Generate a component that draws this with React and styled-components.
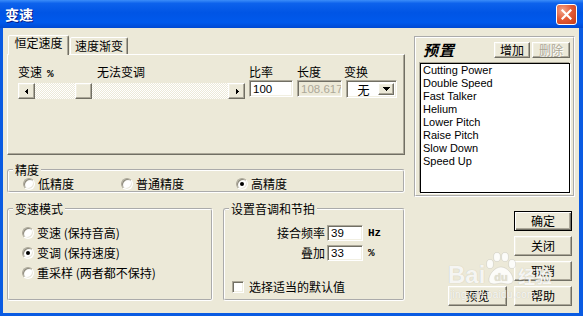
import React from "react";
import styled, { createGlobalStyle, css } from "styled-components";

const CJK = `"Noto Sans CJK SC", "Liberation Sans", sans-serif`;
const LATIN = `"Liberation Sans", Arial, sans-serif`;

const GlobalStyle = createGlobalStyle`
  html, body { margin: 0; padding: 0; background: #ffffff; }
  body { font-family: ${CJK}; font-size: 12px; }
  *, *::before, *::after { box-sizing: border-box; }
`;

const raised = css`
  background: #ece9d8;
  border: 1px solid;
  border-color: #ffffff #716f64 #716f64 #ffffff;
  box-shadow: inset -1px -1px 0 #aca899, inset 1px 1px 0 #f1efe2;
`;

const sunken = css`
  border: 1px solid;
  border-color: #aca899 #ffffff #ffffff #aca899;
  box-shadow: inset 1px 1px 0 #716f64, inset -1px -1px 0 #f1efe2;
`;

const Window = styled.div`
  position: relative;
  width: 583px;
  height: 316px;
  display: flex;
  flex-direction: column;
  background: #0a5be2;
  overflow: hidden;
  font-family: ${CJK};
  font-size: 12px;
  color: #000;
`;

const TitleBar = styled.div`
  flex: none;
  height: 28px;
  display: flex;
  align-items: center;
  justify-content: space-between;
  padding: 0 6px 0 5px;
  background: linear-gradient(
    180deg,
    #3b8df9 0%,
    #0d62ec 12%,
    #0055e5 45%,
    #0059ec 80%,
    #0049d2 100%
  );
`;

const Title = styled.span`
  color: #fff;
  font-weight: bold;
  font-size: 14px;
  letter-spacing: 0px;
  text-shadow: 1px 1px 0 #0a1883;
`;

const CloseButton = styled.div`
  align-self: flex-start;
  margin-top: 4px;
  width: 21px;
  height: 21px;
  border: 1px solid #fff;
  border-radius: 3px;
  background: radial-gradient(circle at 30% 28%, #f2a58b 0%, #e35a36 48%, #c53c16 100%);
  display: flex;
  align-items: center;
  justify-content: center;
`;

const Frame = styled.div`
  flex: 1;
  min-height: 0;
  display: flex;
  padding: 0 4px 3px 3px;
`;

const Client = styled.div`
  flex: 1;
  background: #ece9d8;
  display: grid;
  grid-template-columns: 398px 161px;
  column-gap: 9px;
  align-items: start;
  padding: 7px 4px 0 4px;
`;

const LeftColumn = styled.div`
  display: flex;
  flex-direction: column;
`;

const TabStrip = styled.div`
  display: flex;
  align-items: flex-end;
  height: 19px;
  padding-left: 1px;
  position: relative;
  z-index: 1;
`;

const Tab = styled.div`
  width: ${(p) => p.$w}px;
  height: ${(p) => (p.$active ? 20 : 17)}px;
  margin-bottom: ${(p) => (p.$active ? -1 : 0)}px;
  margin-left: ${(p) => p.$gap || 0}px;
  padding-top: ${(p) => (p.$active ? 0 : 1)}px;
  background: #ece9d8;
  border: 1px solid;
  border-bottom: none;
  border-color: #fff #716f64 transparent #fff;
  box-shadow: inset -1px 0 0 #aca899;
  border-radius: 2px 2px 0 0;
  text-align: center;
  line-height: 14px;
  white-space: nowrap;
`;

const TabPanel = styled.div`
  height: 101px;
  border: 1px solid;
  border-color: #fff #716f64 #716f64 #fff;
  box-shadow: inset -1px -1px 0 #aca899;
  display: grid;
  grid-template-columns: 227px 44px 45px 51px;
  grid-template-rows: 14px auto;
  column-gap: 4px;
  row-gap: 1px;
  align-items: start;
  align-content: start;
  padding: 10px 0 0 10px;
`;

const LabelCell = styled.div`
  display: flex;
`;

const FieldLabel = styled.span`
  display: block;
  line-height: 14px;
  white-space: nowrap;
  width: ${(p) => (p.$w ? `${p.$w}px` : "auto")};
  margin-left: ${(p) => p.$shift || 0}px;
`;

const Percent = styled.span`
  font-family: "Liberation Mono", monospace;
  font-size: 11px;
  font-weight: bold;
  margin-left: 5px;
`;

const ScrollBar = styled.div`
  display: flex;
  height: 16px;
  margin-top: 3px;
  background-color: #ece9d8;
  background-image: repeating-conic-gradient(#ffffff 0 25%, #ece9d8 0 50%);
  background-size: 2px 2px;
`;

const ScrollButton = styled.div`
  ${raised};
  flex: none;
  width: ${(p) => p.$w || 17}px;
  height: 16px;
  display: flex;
  align-items: center;
  justify-content: center;
  margin-left: ${(p) => p.$offset || 0}px;
`;

const ScrollTrack = styled.div`
  flex: 1;
  display: flex;
`;

const TextBox = styled.div`
  ${sunken};
  width: ${(p) => (p.$w ? `${p.$w}px` : "auto")};
  height: ${(p) => p.$h || 17}px;
  background: ${(p) => (p.$disabled ? "#ece9d8" : "#ffffff")};
  color: ${(p) => (p.$disabled ? "#aca899" : "#000")};
  font-family: ${LATIN};
  font-size: 11.5px;
  display: flex;
  align-items: center;
  padding-left: 3px;
  overflow: hidden;
  white-space: nowrap;
`;

const SelectBox = styled.div`
  ${sunken};
  height: 18px;
  background: #fff;
  display: flex;
  align-items: stretch;
  padding: 2px;
`;

const SelectValue = styled.span`
  flex: 1;
  display: flex;
  align-items: center;
  justify-content: center;
  font-size: 12px;
`;

const DropButton = styled.div`
  ${raised};
  width: 16px;
  display: flex;
  align-items: center;
  justify-content: center;
`;

const Group = styled.fieldset`
  margin: ${(p) => p.$mt || 0}px 0 0 0;
  padding: 0;
  min-width: 0;
  width: ${(p) => (p.$w ? `${p.$w}px` : "auto")};
  flex: ${(p) => (p.$w ? "none" : "1")};
  height: ${(p) => p.$h}px;
  border: 2px groove #ffffff;
  border-radius: 3px;
`;

const Legend = styled.legend`
  margin-left: 4px;
  padding: 0 2px;
  line-height: 14px;
  font-size: 12px;
`;

const RadioRow = styled.div`
  display: flex;
  align-items: center;
  height: 14px;
  padding-left: 14px;
`;

const RadioColumn = styled.div`
  display: flex;
  flex-direction: column;
  padding: 7px 0 0 13px;
`;

const RadioItem = styled.label`
  display: flex;
  align-items: center;
  gap: 3px;
  height: ${(p) => p.$h || 14}px;
  width: ${(p) => (p.$w ? `${p.$w}px` : "auto")};
  white-space: nowrap;
  line-height: 14px;
`;

const RadioDot = styled.span`
  flex: none;
  width: 12px;
  height: 12px;
  border-radius: 50%;
  border: 1px solid;
  border-color: #aca899 #ffffff #ffffff #aca899;
  box-shadow: inset 1px 1px 0 #8d8a7c, inset -1px -1px 0 #e9e7dc;
  background: radial-gradient(circle at 65% 65%, #ffffff 45%, #e6e4da 100%);
  display: flex;
  align-items: center;
  justify-content: center;
  &::after {
    content: "";
    display: ${(p) => (p.$checked ? "block" : "none")};
    width: 4px;
    height: 4px;
    border-radius: 50%;
    background: #000;
  }
`;

const BottomRow = styled.div`
  display: flex;
  gap: 10px;
  margin-top: 9px;
`;

const ParamArea = styled.div`
  display: flex;
  flex-direction: column;
  gap: 4px;
  padding-top: 9px;
`;

const ParamRow = styled.div`
  display: flex;
  align-items: center;
  height: 16px;
`;

const ParamLabel = styled.span`
  width: 100px;
  margin-right: 2px;
  text-align: right;
  line-height: 14px;
`;

const Unit = styled.span`
  margin-left: 5px;
  font-family: "Liberation Mono", monospace;
  font-size: 11px;
  font-weight: bold;
`;

const CheckRow = styled.label`
  display: flex;
  align-items: center;
  gap: 5px;
  margin-top: 16px;
  padding-left: 7px;
  height: 12px;
  line-height: 14px;
`;

const CheckBox = styled.span`
  ${sunken};
  flex: none;
  width: 12px;
  height: 12px;
  background: #fff;
`;

const RightColumn = styled.div`
  display: flex;
  flex-direction: column;
`;

const PresetBox = styled.div`
  margin-top: 1px;
  height: 161px;
  border: 2px groove #ffffff;
  display: flex;
  flex-direction: column;
  padding: 4px 3px 2px 4px;
`;

const PresetHeader = styled.div`
  display: flex;
  align-items: center;
  justify-content: space-between;
  height: 16px;
  padding-left: 3px;
`;

const PresetTitle = styled.span`
  font-size: 15px;
  font-weight: bold;
  font-style: italic;
  line-height: 16px;
  letter-spacing: 1px;
`;

const HeaderButtons = styled.div`
  display: flex;
  gap: 2px;
`;

const Button = styled.div`
  ${raised};
  width: ${(p) => p.$w}px;
  height: ${(p) => p.$h || 20}px;
  display: flex;
  align-items: center;
  justify-content: center;
  font-size: 12px;
  line-height: 14px;
  white-space: nowrap;
  color: ${(p) => (p.$disabled ? "#aca899" : "#000")};
  text-shadow: ${(p) => (p.$disabled ? "1px 1px 0 #ffffff" : "none")};
  grid-column: ${(p) => p.$col || "auto"};
  ${(p) =>
    p.$default &&
    css`
      border: 1px solid #000;
      box-shadow: inset 1px 1px 0 #ffffff, inset -1px -1px 0 #716f64,
        inset -2px -2px 0 #aca899;
    `}
`;

const ListBox = styled.div`
  flex: 1;
  margin-top: 5px;
  background: #fff;
  border: 1px solid #000;
  box-shadow: -1px -1px 0 #aca899, 1px 1px 0 #ffffff;
  padding: 0 0 0 2px;
  font-family: ${LATIN};
  font-size: 11px;
  line-height: 13px;
`;

const ListItem = styled.div`
  height: 13px;
  white-space: nowrap;
`;

const ButtonGrid = styled.div`
  margin-top: 14px;
  margin-right: 3px;
  display: grid;
  grid-template-columns: 59px 58px;
  grid-auto-rows: 20px;
  column-gap: 7px;
  row-gap: 5px;
  justify-content: end;
`;

const Watermark = styled.div`
  position: absolute;
  left: 448px;
  top: 252px;
  pointer-events: none;
  color: rgba(255, 255, 255, 0.85);
  text-shadow: 0 0 1px rgba(120, 120, 110, 0.35);
  display: flex;
  flex-direction: column;
`;

const WatermarkRow = styled.div`
  display: flex;
  align-items: flex-start;
`;

const WatermarkBai = styled.span`
  font-family: "Liberation Sans", sans-serif;
  font-weight: bold;
  font-size: 24px;
  line-height: 24px;
  margin-top: 11px;
`;

const WatermarkJing = styled.span`
  font-family: ${CJK};
  font-weight: bold;
  font-size: 17px;
  line-height: 17px;
  margin-top: 15px;
  margin-left: 1px;
`;

const WatermarkUrl = styled.span`
  font-family: "Liberation Sans", sans-serif;
  font-size: 10px;
  line-height: 10px;
  margin-top: 3px;
  margin-left: 2px;
  letter-spacing: 0.3px;
`;

const LeftArrow = () => (
  <svg width="4" height="7" viewBox="0 0 4 7" shapeRendering="crispEdges">
    <polygon points="3,0 3,7 0,3.5" fill="#000" />
  </svg>
);

const RightArrow = () => (
  <svg width="4" height="7" viewBox="0 0 4 7" shapeRendering="crispEdges">
    <polygon points="1,0 1,7 4,3.5" fill="#000" />
  </svg>
);

const DownArrow = () => (
  <svg width="7" height="4" viewBox="0 0 7 4" shapeRendering="crispEdges">
    <polygon points="0,0 7,0 3.5,4" fill="#000" />
  </svg>
);

const Radio = ({ checked, children, w, h }) => (
  <RadioItem $w={w} $h={h}>
    <RadioDot $checked={checked} />
    <span>{children}</span>
  </RadioItem>
);

const presets = [
  "Cutting Power",
  "Double Speed",
  "Fast Talker",
  "Helium",
  "Lower Pitch",
  "Raise Pitch",
  "Slow Down",
  "Speed Up",
];

export default function App() {
  return (
    <>
      <GlobalStyle />
      <Window>
        <TitleBar>
          <Title>变速</Title>
          <CloseButton>
            <svg width="11" height="11" viewBox="0 0 11 11">
              <path
                d="M1.5 1.5 L9.5 9.5 M9.5 1.5 L1.5 9.5"
                stroke="#fff"
                strokeWidth="2.2"
                strokeLinecap="square"
              />
            </svg>
          </CloseButton>
        </TitleBar>
        <Frame>
          <Client>
            <LeftColumn>
              <TabStrip>
                <Tab $active $w={61}>
                  恒定速度
                </Tab>
                <Tab $w={58} $gap={1}>
                  速度渐变
                </Tab>
              </TabStrip>
              <TabPanel>
                <LabelCell>
                  <FieldLabel $w={79}>
                    变速<Percent>%</Percent>
                  </FieldLabel>
                  <FieldLabel>无法变调</FieldLabel>
                </LabelCell>
                <FieldLabel>比率</FieldLabel>
                <FieldLabel>长度</FieldLabel>
                <FieldLabel $shift={-2}>变换</FieldLabel>
                <ScrollBar>
                  <ScrollButton>
                    <LeftArrow />
                  </ScrollButton>
                  <ScrollTrack>
                    <ScrollButton $offset={40} />
                  </ScrollTrack>
                  <ScrollButton>
                    <RightArrow />
                  </ScrollButton>
                </ScrollBar>
                <TextBox>100</TextBox>
                <TextBox $disabled>108.617</TextBox>
                <SelectBox>
                  <SelectValue>无</SelectValue>
                  <DropButton>
                    <DownArrow />
                  </DropButton>
                </SelectBox>
              </TabPanel>

              <Group $mt={8} $h={36}>
                <Legend>精度</Legend>
                <RadioRow>
                  <Radio w={98}>低精度</Radio>
                  <Radio w={115}>普通精度</Radio>
                  <Radio checked>高精度</Radio>
                </RadioRow>
              </Group>

              <BottomRow>
                <Group $w={206} $h={99}>
                  <Legend>变速模式</Legend>
                  <RadioColumn>
                    <Radio h={20}>变速 (保持音高)</Radio>
                    <Radio h={20} checked>
                      变调 (保持速度)
                    </Radio>
                    <Radio h={20}>重采样 (两者都不保持)</Radio>
                  </RadioColumn>
                </Group>
                <Group $h={99}>
                  <Legend>设置音调和节拍</Legend>
                  <ParamArea>
                    <ParamRow>
                      <ParamLabel>接合频率</ParamLabel>
                      <TextBox $w={36} $h={16}>
                        39
                      </TextBox>
                      <Unit>Hz</Unit>
                    </ParamRow>
                    <ParamRow>
                      <ParamLabel>叠加</ParamLabel>
                      <TextBox $w={36} $h={16}>
                        33
                      </TextBox>
                      <Unit>%</Unit>
                    </ParamRow>
                    <CheckRow>
                      <CheckBox />
                      <span>选择适当的默认值</span>
                    </CheckRow>
                  </ParamArea>
                </Group>
              </BottomRow>
            </LeftColumn>

            <RightColumn>
              <PresetBox>
                <PresetHeader>
                  <PresetTitle>预置</PresetTitle>
                  <HeaderButtons>
                    <Button $w={36} $h={16}>
                      增加
                    </Button>
                    <Button $w={38} $h={16} $disabled>
                      删除
                    </Button>
                  </HeaderButtons>
                </PresetHeader>
                <ListBox>
                  {presets.map((p) => (
                    <ListItem key={p}>{p}</ListItem>
                  ))}
                </ListBox>
              </PresetBox>
              <ButtonGrid>
                <Button $w={58} $col={2} $default>
                  确定
                </Button>
                <Button $w={58} $col={2}>
                  关闭
                </Button>
                <Button $w={58} $col={2}>
                  取消
                </Button>
                <Button $w={59} $col={1}>
                  预览
                </Button>
                <Button $w={58} $col={2}>
                  帮助
                </Button>
              </ButtonGrid>
            </RightColumn>
          </Client>
        </Frame>

        <Watermark>
          <WatermarkRow>
            <WatermarkBai>Bai</WatermarkBai>
            <svg width="32" height="34" viewBox="0 0 32 34">
              <g fill="rgba(255,255,255,0.85)" stroke="rgba(140,140,130,0.35)" strokeWidth="0.6">
                <ellipse cx="5" cy="12" rx="3.5" ry="4.5" />
                <ellipse cx="12" cy="5" rx="3.5" ry="4.5" />
                <ellipse cx="20" cy="5" rx="3.5" ry="4.5" />
                <ellipse cx="27" cy="12" rx="3.5" ry="4.5" />
                <path d="M16 15 C9 15 3 24 4 29 C5 33 11 32 16 31 C21 32 27 33 28 29 C29 24 23 15 16 15 Z" />
              </g>
              <text
                x="16"
                y="29"
                textAnchor="middle"
                fontFamily="Liberation Sans, sans-serif"
                fontWeight="bold"
                fontSize="11"
                fill="#e2dfcf"
              >
                du
              </text>
            </svg>
            <WatermarkJing>经验</WatermarkJing>
          </WatermarkRow>
          <WatermarkUrl>jingyan.baidu.com</WatermarkUrl>
        </Watermark>
      </Window>
    </>
  );
}
